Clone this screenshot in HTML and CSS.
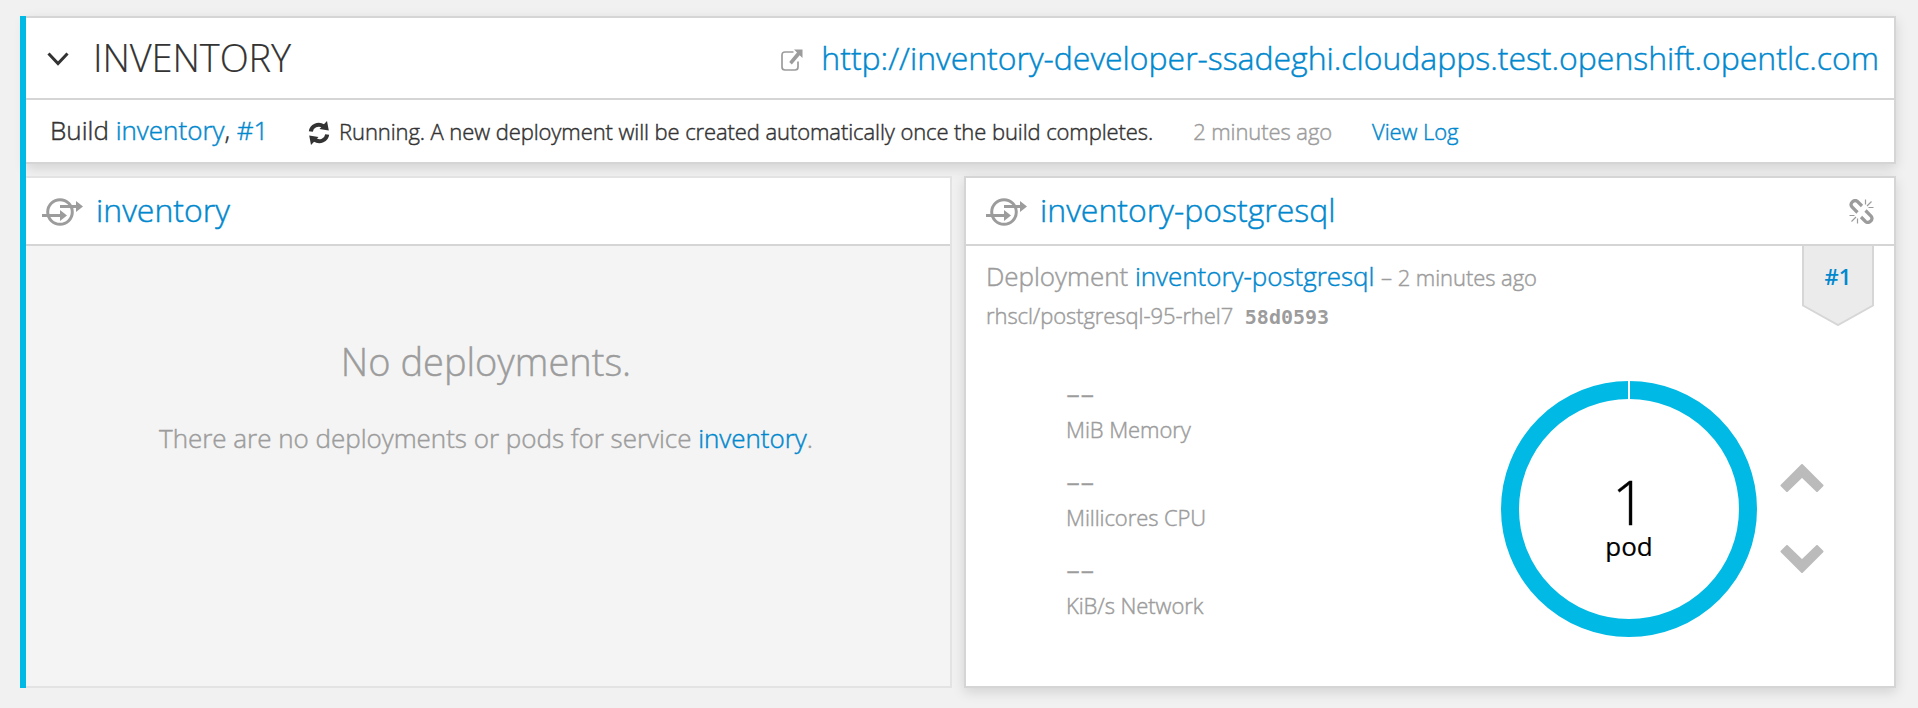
FILE: index.html
```html
<!DOCTYPE html>
<html lang="en">
<head>
<meta charset="utf-8">
<title>Inventory</title>
<link rel="stylesheet" href="styles.css">
</head>
<body>
<main class="service-group">
  <section class="card group-head">
    <header class="title-row">
      <svg class="toggle" viewBox="0 0 22 14"><path d="M1.500 1.500 11 11.500 20.500 1.500" fill="none" stroke="currentColor" stroke-width="3"/></svg>
      <h1 class="title">INVENTORY</h1>
      <svg class="external" viewBox="0 0 22 22"><path d="M12.500 3H4Q1 3 1 6v12Q1 21 4 21h10Q17 21 17 18v-5.500" fill="none" stroke="currentColor" stroke-width="1.700"/><path d="M13 0.500h8.500V9L18.700 6.200 10.800 15.500 8.200 13 16 3.400z" fill="currentColor"/></svg>
      <a class="route">http://inventory-developer-ssadeghi.cloudapps.test.openshift.opentlc.com</a>
    </header>
    <div class="build-row">
      <span class="build">Build <a>inventory</a>, <a>#1</a></span>
      <svg class="sync" viewBox="0 0 22 24"><path d="M2.800 10.500C3.500 5 10 1.800 15.500 5.200M19.200 13.500C18.500 19 12 22.200 6.500 18.800" fill="none" stroke="currentColor" stroke-width="4"/><path d="M19 0 20.800 9.500 11.500 8zM3 24 1.200 14.500 10.500 16z" fill="currentColor"/></svg>
      <span class="status">Running. A new deployment will be created automatically once the build completes.</span>
      <span class="age">2 minutes ago</span>
      <a class="log">View Log</a>
    </div>
  </section>
  <div class="services">
    <section class="card service idle">
      <header class="service-head">
        <svg class="service-icon" viewBox="0 0 41 28"><circle cx="18" cy="14" r="12.300"/><path d="M18 8.500h17M0 17.500h20"/><path class="solid" d="M34 3l7 5.500-7 5.500zM18 12l7 5.500-7 5.500z"/></svg>
        <a class="service-name">inventory</a>
      </header>
      <div class="empty">
        <h2 class="empty-title">No deployments.</h2>
        <p class="empty-text">There are no deployments or pods for service <a>inventory</a>.</p>
      </div>
    </section>
    <section class="card service">
      <header class="service-head">
        <svg class="service-icon" viewBox="0 0 41 28"><circle cx="18" cy="14" r="12.300"/><path d="M18 8.500h17M0 17.500h20"/><path class="solid" d="M34 3l7 5.500-7 5.500zM18 12l7 5.500-7 5.500z"/></svg>
        <a class="service-name">inventory-postgresql</a>
        <svg class="unlink" viewBox="0 0 25 25"><g fill="none" stroke="currentColor"><path stroke-width="3.200" d="M8.500 13.500 3 8Q.8 5 3.500 2.700T8.500 2.500L13 7M16.500 11.500l5.500 5.500Q24.200 20 21.500 22.300T16.500 22.500L12 18"/><path stroke-width="1.200" d="M16.500.5v5M22.500 2.500 18 7M24.500 8.500h-5M8.500 24.500v-5M2.500 22.500 7 18M.5 16.500h5"/></g></svg>
      </header>
      <div class="details">
        <div class="info">
          <div class="deployment">Deployment <a>inventory-postgresql</a> <small>– 2 minutes ago</small></div>
          <div class="image">rhscl/postgresql-95-rhel7 <code>58d0593</code></div>
          <dl class="metrics">
            <dt><span>--</span></dt><dd>MiB Memory</dd>
            <dt><span>--</span></dt><dd>Millicores CPU</dd>
            <dt><span>--</span></dt><dd>KiB/s Network</dd>
          </dl>
        </div>
        <div class="scaling">
          <div class="donut">
            <svg class="ring" viewBox="0 0 256 256"><circle cx="128" cy="128" r="119" fill="none" stroke="#00b9e4" stroke-width="18"/><path d="M128 0v19" stroke="#fff" stroke-width="2"/></svg>
            <span class="count">1</span>
            <span class="unit">pod</span>
          </div>
          <div class="arrows">
            <svg viewBox="0 0 44 28"><path d="M22 1 42.500 21.500 37 27 22 12.500 7 27 1.500 21.500z"/></svg>
            <svg viewBox="0 0 44 28"><path d="M22 27 42.500 6.500 37 1 22 15.500 7 1 1.500 6.500z"/></svg>
          </div>
        </div>
        <div class="ribbon">
          <svg class="ribbon-shape" viewBox="0 0 72 80"><path d="M1-2V59.500L36 79 71 59.500V-2z" fill="#ebebeb" stroke="#d6d6d6" stroke-width="2"/></svg>
          <a class="ribbon-label">#1</a>
        </div>
      </div>
    </section>
  </div>
</main>
</body>
</html>
```
FILE: styles.css
```css
* { box-sizing: border-box; }
body {
  margin: 0;
  height: 708px;
  overflow: hidden;
  padding: 16px 22px 20px 20px;
  background: #f1f1f1;
  color: #333;
  font-family: "Open Sans", sans-serif;
  font-weight: 300;
  -webkit-text-stroke: .45px;
}
a { color: #0088ce; }
svg { display: block; flex: none; }
h1, h2, p, dl, dd { margin: 0; font-weight: 300; }
.service-group {
  position: relative;
  height: 672px;
  padding-left: 6px;
}
.service-group::before {
  content: "";
  position: absolute;
  z-index: 2;
  left: 0;
  top: 0;
  width: 6px;
  height: 100%;
  background: #00b9e4;
}
.card {
  background: #fff;
  border: 2px solid #d5d5d5;
  box-shadow: 0 4px 12px rgba(0, 0, 0, .13);
}
.group-head { height: 148px; border-left: 0; margin-bottom: 12px; }
.title-row {
  display: flex;
  align-items: center;
  height: 82px;
  padding: 0 15px 0 21px;
  border-bottom: 2px solid #d5d5d5;
}
.toggle { width: 22px; height: 14px; margin-top: 2px; }
.title { margin: 0 0 2px 24px; font-size: 38px; line-height: 50px; letter-spacing: -.1px; -webkit-text-stroke: .2px; }
.external { width: 22px; height: 22px; margin-left: auto; margin-top: 4px; color: #9c9c9c; }
.route { margin: 0 0 1px 18px; font-size: 32px; letter-spacing: -.03px; }
.build-row { display: flex; align-items: center; height: 62px; padding-left: 24px; white-space: nowrap; }
.build { width: 258px; font-size: 26px; padding-bottom: 2px; }
.sync { width: 22px; height: 24px; margin-top: 4px; }
.status { margin-left: 9px; }
.status, .age, .log { font-size: 22px; letter-spacing: -.09px; }
.age { margin-left: 40px; color: #9c9c9c; }
.log { margin-left: 40px; }
.services { display: grid; grid-template-columns: 926px 932px; gap: 12px; height: 512px; }
.service { position: relative; }
.idle { background: #f4f4f4; border-left: 0; border-color: #e3e3e3; box-shadow: none; }
.service-head {
  display: flex;
  align-items: center;
  height: 68px;
  padding: 0 20px;
  background: #fff;
  border-bottom: 2px solid #d5d5d5;
}
.idle .service-head { padding-left: 16px; }
.service-icon { width: 41px; height: 28px; fill: none; stroke: #9c9c9c; stroke-width: 3; margin-top: 2px; }
.service-icon .solid { fill: #9c9c9c; stroke: none; }
.service-name { margin: 0 0 4px 13px; font-size: 32px; }
.unlink { width: 25px; height: 25px; margin-left: auto; color: #9c9c9c; }
.empty { text-align: center; color: #9c9c9c; padding: 85px 4px 0 0; }
.empty-title { font-size: 38px; line-height: 60px; }
.empty-text { font-size: 26px; line-height: 40px; margin-top: 27px; letter-spacing: -.02px; }
.details { position: relative; display: flex; height: 440px; color: #9c9c9c; }
.info { width: 535px; padding: 10px 0 0 20px; white-space: nowrap; }
.deployment { font-size: 26px; line-height: 40px; letter-spacing: -.03px; }
.deployment small { font-size: 22px; letter-spacing: -.07px; }
.image { font-size: 22px; line-height: 36px; letter-spacing: -.08px; }
.image code { margin-left: 6px; font: 700 20px "DejaVu Sans Mono", monospace; letter-spacing: 0; -webkit-text-stroke: 0; }
.metrics { padding: 42px 0 0 80px; font-size: 22px; letter-spacing: -.08px; }
.metrics dt { height: 36px; line-height: 36px; font-weight: 400; letter-spacing: 0; }
.metrics dt span { display: inline-block; transform: scaleX(2); transform-origin: left; }
.metrics dd { height: 52px; line-height: 36px; }
.scaling { display: flex; padding-top: 135px; }
.donut { position: relative; width: 256px; height: 256px; text-align: center; color: #000; }
.ring { position: absolute; inset: 0; }
.count { display: block; padding-top: 91px; font-size: 60px; line-height: 61px; }
.unit { display: block; font-size: 26px; line-height: 26px; font-weight: 400; -webkit-text-stroke: .2px; }
.arrows { display: flex; flex-direction: column; gap: 53px; margin: 83px 0 0 23px; }
.arrows svg { width: 44px; height: 28px; fill: #bbb; stroke: #bbb; stroke-width: 2; stroke-linejoin: round; }
.ribbon { position: absolute; right: 20px; top: 0; width: 72px; height: 80px; text-align: center; }
.ribbon-shape { position: absolute; inset: 0; }
.ribbon-label { position: relative; font-size: 22px; line-height: 60px; font-weight: 600; -webkit-text-stroke: 0; }
```
